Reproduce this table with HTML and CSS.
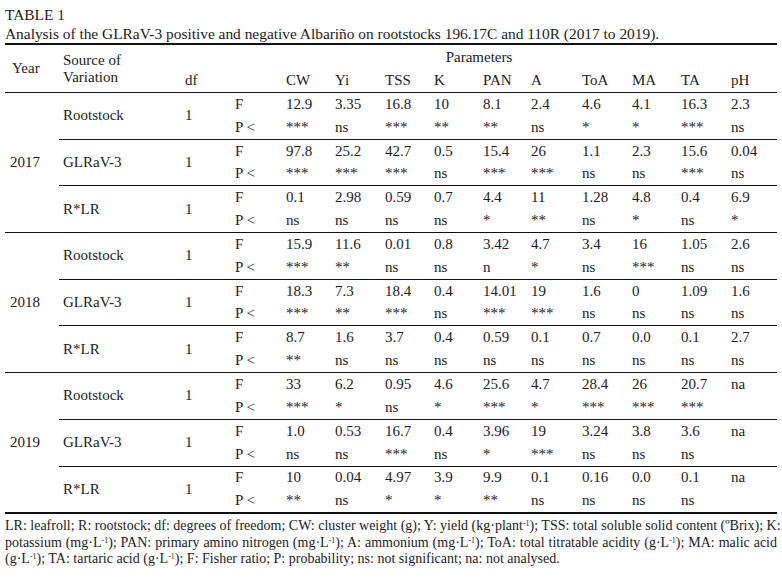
FILE: index.html
```html
<!DOCTYPE html>
<html lang="en">
<head>
<meta charset="utf-8">
<title>Table 1</title>
<link rel="stylesheet" href="styles.css">
</head>
<body>
<div class="page">
  <div class="title">TABLE 1</div>
  <div class="caption">Analysis of the GLRaV-3 positive and negative Albariño on rootstocks 196.17C and 110R (2017 to 2019).</div>
  <table class="data">
    <colgroup>
      <col class="c-year"><col class="c-src"><col class="c-df"><col class="c-fp">
      <col class="c-cw"><col class="c-yi"><col class="c-tss"><col class="c-k"><col class="c-pan">
      <col class="c-a"><col class="c-toa"><col class="c-ma"><col class="c-ta"><col class="c-ph">
    </colgroup>
    <thead>
      <tr class="h1">
        <th rowspan="2" class="year hb">Year</th>
        <th rowspan="2" class="src hb">Source of<br>Variation</th>
        <th colspan="12" class="params">Parameters</th>
      </tr>
      <tr class="h2">
        <th class="hb">df</th><th class="hb"></th>
        <th class="hb">CW</th><th class="hb">Yi</th><th class="hb">TSS</th><th class="hb">K</th><th class="hb">PAN</th>
        <th class="hb">A</th><th class="hb">ToA</th><th class="hb">MA</th><th class="hb">TA</th><th class="hb">pH</th>
      </tr>
    </thead>
    <tbody>
      <!-- 2017 -->
      <tr class="fr">
        <td rowspan="6" class="year">2017</td>
        <td rowspan="2" class="src">Rootstock</td><td rowspan="2" class="df">1</td>
        <td>F</td><td>12.9</td><td>3.35</td><td>16.8</td><td>10</td><td>8.1</td><td>2.4</td><td>4.6</td><td>4.1</td><td>16.3</td><td>2.3</td>
      </tr>
      <tr class="pr">
        <td>P &lt;</td><td>***</td><td>ns</td><td>***</td><td>**</td><td>**</td><td>ns</td><td>*</td><td>*</td><td>***</td><td>ns</td>
      </tr>
      <tr class="fr grp">
        <td rowspan="2" class="src">GLRaV-3</td><td rowspan="2" class="df">1</td>
        <td>F</td><td>97.8</td><td>25.2</td><td>42.7</td><td>0.5</td><td>15.4</td><td>26</td><td>1.1</td><td>2.3</td><td>15.6</td><td>0.04</td>
      </tr>
      <tr class="pr">
        <td>P &lt;</td><td>***</td><td>***</td><td>***</td><td>ns</td><td>***</td><td>***</td><td>ns</td><td>ns</td><td>***</td><td>ns</td>
      </tr>
      <tr class="fr grp">
        <td rowspan="2" class="src">R*LR</td><td rowspan="2" class="df">1</td>
        <td>F</td><td>0.1</td><td>2.98</td><td>0.59</td><td>0.7</td><td>4.4</td><td>11</td><td>1.28</td><td>4.8</td><td>0.4</td><td>6.9</td>
      </tr>
      <tr class="pr">
        <td>P &lt;</td><td>ns</td><td>ns</td><td>ns</td><td>ns</td><td>*</td><td>**</td><td>ns</td><td>*</td><td>ns</td><td>*</td>
      </tr>
      <!-- 2018 -->
      <tr class="fr grp">
        <td rowspan="6" class="year">2018</td>
        <td rowspan="2" class="src">Rootstock</td><td rowspan="2" class="df">1</td>
        <td>F</td><td>15.9</td><td>11.6</td><td>0.01</td><td>0.8</td><td>3.42</td><td>4.7</td><td>3.4</td><td>16</td><td>1.05</td><td>2.6</td>
      </tr>
      <tr class="pr">
        <td>P &lt;</td><td>***</td><td>**</td><td>ns</td><td>ns</td><td>n</td><td>*</td><td>ns</td><td>***</td><td>ns</td><td>ns</td>
      </tr>
      <tr class="fr grp">
        <td rowspan="2" class="src">GLRaV-3</td><td rowspan="2" class="df">1</td>
        <td>F</td><td>18.3</td><td>7.3</td><td>18.4</td><td>0.4</td><td>14.01</td><td>19</td><td>1.6</td><td>0</td><td>1.09</td><td>1.6</td>
      </tr>
      <tr class="pr">
        <td>P &lt;</td><td>***</td><td>**</td><td>***</td><td>ns</td><td>***</td><td>***</td><td>ns</td><td>ns</td><td>ns</td><td>ns</td>
      </tr>
      <tr class="fr grp">
        <td rowspan="2" class="src">R*LR</td><td rowspan="2" class="df">1</td>
        <td>F</td><td>8.7</td><td>1.6</td><td>3.7</td><td>0.4</td><td>0.59</td><td>0.1</td><td>0.7</td><td>0.0</td><td>0.1</td><td>2.7</td>
      </tr>
      <tr class="pr">
        <td>P &lt;</td><td>**</td><td>ns</td><td>ns</td><td>ns</td><td>ns</td><td>ns</td><td>ns</td><td>ns</td><td>ns</td><td>ns</td>
      </tr>
      <!-- 2019 -->
      <tr class="fr grp">
        <td rowspan="6" class="year">2019</td>
        <td rowspan="2" class="src">Rootstock</td><td rowspan="2" class="df">1</td>
        <td>F</td><td>33</td><td>6.2</td><td>0.95</td><td>4.6</td><td>25.6</td><td>4.7</td><td>28.4</td><td>26</td><td>20.7</td><td>na</td>
      </tr>
      <tr class="pr">
        <td>P &lt;</td><td>***</td><td>*</td><td>ns</td><td>*</td><td>***</td><td>*</td><td>***</td><td>***</td><td>***</td><td></td>
      </tr>
      <tr class="fr grp">
        <td rowspan="2" class="src">GLRaV-3</td><td rowspan="2" class="df">1</td>
        <td>F</td><td>1.0</td><td>0.53</td><td>16.7</td><td>0.4</td><td>3.96</td><td>19</td><td>3.24</td><td>3.8</td><td>3.6</td><td>na</td>
      </tr>
      <tr class="pr">
        <td>P &lt;</td><td>ns</td><td>ns</td><td>***</td><td>ns</td><td>*</td><td>***</td><td>ns</td><td>ns</td><td>ns</td><td></td>
      </tr>
      <tr class="fr grp">
        <td rowspan="2" class="src">R*LR</td><td rowspan="2" class="df">1</td>
        <td>F</td><td>10</td><td>0.04</td><td>4.97</td><td>3.9</td><td>9.9</td><td>0.1</td><td>0.16</td><td>0.0</td><td>0.1</td><td>na</td>
      </tr>
      <tr class="pr">
        <td>P &lt;</td><td>**</td><td>ns</td><td>*</td><td>*</td><td>**</td><td>ns</td><td>ns</td><td>ns</td><td>ns</td><td></td>
      </tr>
    </tbody>
  </table>
  <div class="notes">
    <div class="line">LR: leafroll; R: rootstock; df: degrees of freedom; CW: cluster weight (g); Y: yield (kg·plant<sup>-1</sup>); TSS: total soluble solid content (ºBrix); K:</div>
    <div class="line">potassium (mg·L<sup>-1</sup>); PAN: primary amino nitrogen (mg·L<sup>-1</sup>); A: ammonium (mg·L<sup>-1</sup>); ToA: total titratable acidity (g·L<sup>-1</sup>); MA: malic acid</div>
    <div class="line last">(g·L<sup>-1</sup>); TA: tartaric acid (g·L<sup>-1</sup>); F: Fisher ratio; P: probability; ns: not significant; na: not analysed.</div>
  </div>
</div>
</body>
</html>
```

FILE: styles.css
```css
html, body {
  margin: 0;
  padding: 0;
  background: #ffffff;
}

body {
  font-family: "Liberation Serif", "Times New Roman", serif;
  color: #1c1c1c;
}

.page {
  width: 772px;
  padding: 5px 5px 0 5px;
}

.title {
  font-size: 15.4px;
  line-height: 19px;
}

.caption {
  font-size: 15.4px;
  line-height: 19px;
}

.data {
  width: 772px;
  table-layout: fixed;
  border-collapse: separate;
  border-spacing: 0;
  border-top: 2px solid #111;
  border-bottom: 2px solid #111;
  font-size: 15px;
}

.c-year { width: 54px; }
.c-src  { width: 122px; }
.c-df   { width: 50px; }
.c-fp   { width: 51px; }
.c-cw   { width: 49px; }
.c-yi   { width: 50px; }
.c-tss  { width: 49px; }
.c-k    { width: 49px; }
.c-pan  { width: 48px; }
.c-a    { width: 51px; }
.c-toa  { width: 50px; }
.c-ma   { width: 49px; }
.c-ta   { width: 50px; }
.c-ph   { width: 50px; }

.data th,
.data td {
  padding: 0 0 0 4px;
  text-align: left;
  font-weight: normal;
  vertical-align: middle;
  white-space: nowrap;
  line-height: 17px;
}

.data th.year {
  padding-left: 7px;
}

.data td.year {
  padding-left: 5px;
}

.h1 th {
  height: 24px;
}

.h1 th.params {
  text-align: center;
  padding: 0;
}

.h2 th {
  height: 23px;
}

.hb {
  border-bottom: 1px solid #111;
}

.fr td {
  height: 22.7px;
}

.pr td {
  height: 23px;
}

.grp td {
  border-top: 1px solid #111;
}

.notes {
  margin-top: 4px;
  font-size: 14px;
  line-height: 16.5px;
}

.notes .line {
  text-align: justify;
  text-align-last: justify;
  white-space: nowrap;
}

.notes .line.last {
  text-align-last: left;
}

.notes sup {
  font-size: 8px;
  line-height: 0;
  vertical-align: 4px;
}
```
